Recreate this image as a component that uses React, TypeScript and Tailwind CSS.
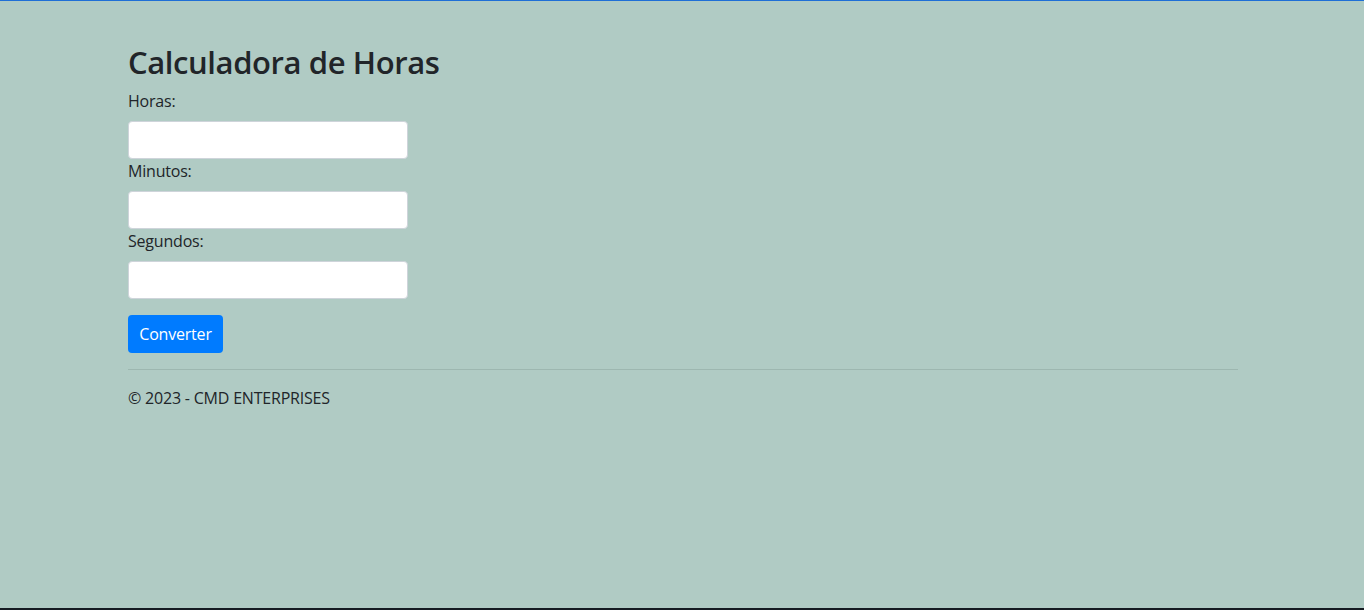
export default function App() {
  return (
    <div
      className="flex min-h-[610px] flex-col border-t border-[#1e6fd6] bg-[#b0cbc4] text-[#212529]"
      style={{ fontFamily: '"Open Sans", "Noto Sans", sans-serif' }}
    >
      <main className="ml-[128px] w-[1110px] flex-1 pt-[42px]">
        <h1 className="mb-2 text-[31px] font-semibold leading-[38px] tracking-[-0.4px]">Calculadora de Horas</h1>
        <form className="flex flex-col" onSubmit={(e) => e.preventDefault()}>
          <label htmlFor="horas" className="mb-2 text-base leading-6 tracking-[-0.2px]">Horas:</label>
          <input id="horas" type="number" className="h-[38px] w-[280px] rounded border border-[#ced4da] bg-white px-3" />
          <label htmlFor="minutos" className="mb-2 text-base leading-6 tracking-[-0.2px]">Minutos:</label>
          <input id="minutos" type="number" className="h-[38px] w-[280px] rounded border border-[#ced4da] bg-white px-3" />
          <label htmlFor="segundos" className="mb-2 text-base leading-6 tracking-[-0.2px]">Segundos:</label>
          <input id="segundos" type="number" className="h-[38px] w-[280px] rounded border border-[#ced4da] bg-white px-3" />
          <button
            type="submit"
            className="mt-4 h-[38px] w-[95px] rounded bg-[#007bff] text-base tracking-[-0.2px] text-white"
          >
            Converter
          </button>
        </form>
        <hr className="my-4 border-t border-[#9db7b0]" />
        <footer className="text-base leading-6 tracking-[-0.2px]">© 2023 - CMD ENTERPRISES</footer>
      </main>
      <div className="h-[2px] bg-[#161b22]" />
    </div>
  );
}
